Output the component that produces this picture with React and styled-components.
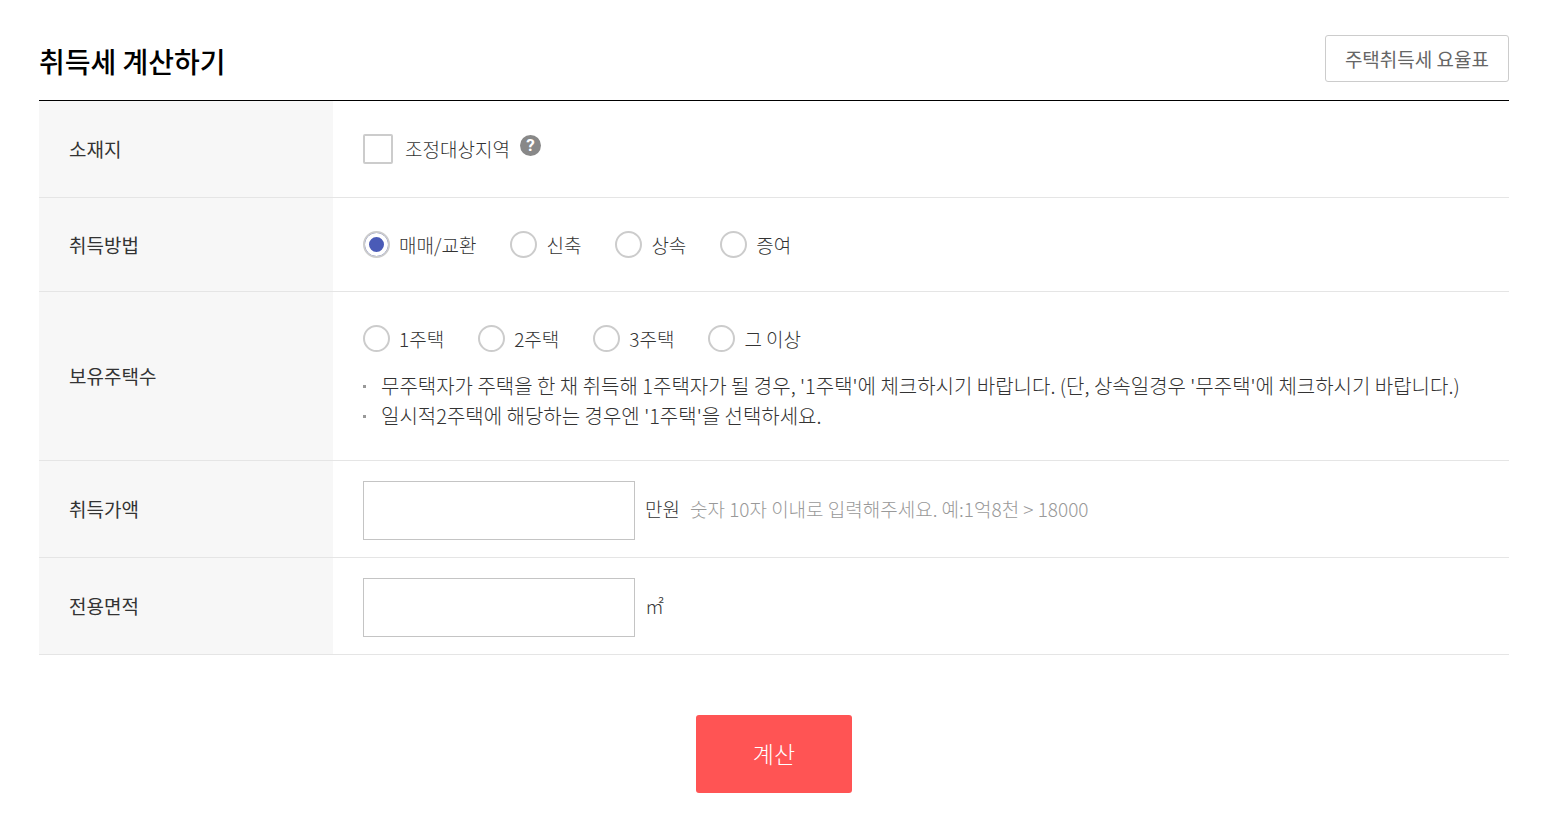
import React, { useState } from 'react';
import styled, { createGlobalStyle } from 'styled-components';

const GlobalStyle = createGlobalStyle`
  * {
    box-sizing: border-box;
  }
  body {
    margin: 0;
    background: #fff;
    color: #333;
    font-family: 'Noto Sans CJK KR', 'Noto Sans', sans-serif;
    font-size: 19px;
    font-weight: 300;
    line-height: 30px;
  }
  button,
  input {
    margin: 0;
    font: inherit;
    color: inherit;
  }
`;

const Page = styled.main`
  padding: 35px 34px 27px 39px;
`;

const Header = styled.header`
  display: flex;
  align-items: flex-start;
  justify-content: space-between;
  padding-bottom: 13px;
  border-bottom: 1px solid #000;
`;

const Title = styled.h1`
  margin: 0;
  color: #000;
  font-size: 28px;
  font-weight: 500;
  line-height: 52px;
`;

const RateButton = styled.button`
  height: 47px;
  padding: 0 19px;
  border: 1px solid #ccc;
  border-radius: 3px;
  background: #fff;
  color: #666;
  font-weight: 400;
  cursor: pointer;
`;

const Table = styled.table`
  width: 100%;
  border-spacing: 0;
  table-layout: fixed;
`;

const HeadCell = styled.th`
  width: 20%;
  padding: 0 30px;
  border-bottom: 1px solid #e5e5e5;
  background: #f7f7f7;
  font-weight: 400;
  text-align: left;
`;

const Cell = styled.td`
  padding: ${props => (props.$field ? '20px 30px 17px' : '33px 30px')};
  border-bottom: 1px solid #e5e5e5;
`;

const Group = styled.div`
  display: flex;
  align-items: center;
  gap: ${props => props.$gap || 10}px;
`;

const Label = styled.label`
  display: flex;
  align-items: center;
  gap: ${props => props.$gap || 9}px;
  line-height: 26px;
  cursor: pointer;
`;

const Checkbox = styled.input`
  appearance: none;
  width: 30px;
  height: 30px;
  border: 2px solid #ccc;
  border-radius: 2px;
  background: #fff;
  cursor: pointer;
  &:checked {
    background: #4a5bb7;
    box-shadow: inset 0 0 0 5px #fff;
  }
`;

const Radio = styled.input`
  appearance: none;
  width: 27px;
  height: 27px;
  border: 2px solid #ccc;
  border-radius: 50%;
  background: #fff;
  cursor: pointer;
  &:checked {
    background: #4a5bb7;
    box-shadow: inset 0 0 0 4px #fff;
  }
`;

const HelpButton = styled.button`
  align-self: flex-start;
  width: 21px;
  height: 21px;
  margin-top: 1px;
  padding: 0;
  border: 0;
  border-radius: 50%;
  background: #888;
  color: #fff;
  font-family: Roboto, sans-serif;
  font-size: 17px;
  font-weight: 700;
  line-height: 21px;
  cursor: pointer;
`;

const Notes = styled.ul`
  margin: 19px 0 -4px;
  padding: 0;
  font-size: 20px;
  list-style: none;
`;

const Note = styled.li`
  display: flex;
  gap: 15px;
  &::before {
    content: '';
    flex: none;
    width: 3px;
    height: 3px;
    margin-top: 14px;
    background: #999;
  }
`;

const TextInput = styled.input`
  width: 272px;
  height: 59px;
  padding: 0 15px;
  border: 1px solid #c4c4c4;
  background: #fff;
`;

const FieldText = styled.span`
  padding-bottom: 4px;
  color: ${props => (props.$muted ? '#999' : '#333')};
`;

const Actions = styled.div`
  display: flex;
  justify-content: center;
  padding-top: 60px;
`;

const SubmitButton = styled.button`
  width: 156px;
  height: 78px;
  padding: 0 0 2px;
  border: 0;
  border-radius: 3px;
  background: #ff5454;
  color: #fff;
  font-size: 23px;
  cursor: pointer;
`;

const methods = ['매매/교환', '신축', '상속', '증여'];
const houseCounts = ['1주택', '2주택', '3주택', '그 이상'];

const RadioGroup = ({ name, label, options, value, onChange }) => (
  <Group $gap={34} role="radiogroup" aria-label={label}>
    {options.map(option => (
      <Label key={option}>
        <Radio
          type="radio"
          name={name}
          value={option}
          checked={value === option}
          onChange={() => onChange(option)}
        />
        {option}
      </Label>
    ))}
  </Group>
);

const App = () => {
  const [adjusted, setAdjusted] = useState(false);
  const [method, setMethod] = useState(methods[0]);
  const [houses, setHouses] = useState('');
  const [price, setPrice] = useState('');
  const [area, setArea] = useState('');

  return (
    <Page>
      <GlobalStyle />
      <Header>
        <Title>취득세 계산하기</Title>
        <RateButton type="button">주택취득세 요율표</RateButton>
      </Header>
      <form onSubmit={e => e.preventDefault()}>
        <Table>
          <tbody>
            <tr>
              <HeadCell scope="row">소재지</HeadCell>
              <Cell>
                <Group>
                  <Label $gap={12}>
                    <Checkbox
                      type="checkbox"
                      checked={adjusted}
                      onChange={e => setAdjusted(e.target.checked)}
                    />
                    조정대상지역
                  </Label>
                  <HelpButton type="button">?</HelpButton>
                </Group>
              </Cell>
            </tr>
            <tr>
              <HeadCell scope="row">취득방법</HeadCell>
              <Cell>
                <RadioGroup
                  name="method"
                  label="취득방법"
                  options={methods}
                  value={method}
                  onChange={setMethod}
                />
              </Cell>
            </tr>
            <tr>
              <HeadCell scope="row">보유주택수</HeadCell>
              <Cell>
                <RadioGroup
                  name="houses"
                  label="보유주택수"
                  options={houseCounts}
                  value={houses}
                  onChange={setHouses}
                />
                <Notes>
                  <Note>
                    무주택자가 주택을 한 채 취득해 1주택자가 될 경우, '1주택'에 체크하시기 바랍니다. (단,
                    상속일경우 '무주택'에 체크하시기 바랍니다.)
                  </Note>
                  <Note>일시적2주택에 해당하는 경우엔 '1주택'을 선택하세요.</Note>
                </Notes>
              </Cell>
            </tr>
            <tr>
              <HeadCell scope="row">
                <label htmlFor="price">취득가액</label>
              </HeadCell>
              <Cell $field>
                <Group>
                  <TextInput
                    id="price"
                    type="text"
                    inputMode="numeric"
                    maxLength={10}
                    value={price}
                    onChange={e => setPrice(e.target.value)}
                  />
                  <FieldText>만원</FieldText>
                  <FieldText $muted>숫자 10자 이내로 입력해주세요. 예:1억8천 &gt; 18000</FieldText>
                </Group>
              </Cell>
            </tr>
            <tr>
              <HeadCell scope="row">
                <label htmlFor="area">전용면적</label>
              </HeadCell>
              <Cell $field>
                <Group>
                  <TextInput
                    id="area"
                    type="text"
                    inputMode="decimal"
                    value={area}
                    onChange={e => setArea(e.target.value)}
                  />
                  <FieldText>㎡</FieldText>
                </Group>
              </Cell>
            </tr>
          </tbody>
        </Table>
        <Actions>
          <SubmitButton type="submit">계산</SubmitButton>
        </Actions>
      </form>
    </Page>
  );
};

export default App;
